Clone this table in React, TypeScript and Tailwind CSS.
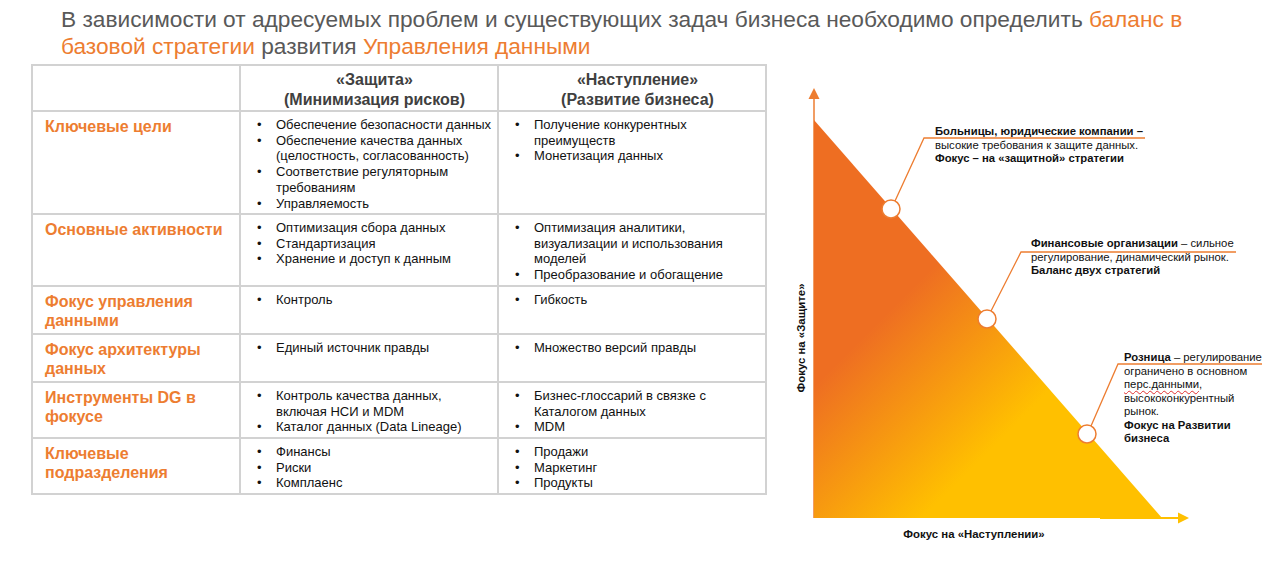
import React from 'react';

type Row = {
  label: string;
  defense: string[];
  offense: string[];
};

const rows: Row[] = [
  {
    label: 'Ключевые цели',
    defense: [
      'Обеспечение безопасности данных',
      'Обеспечение качества данных\n(целостность, согласованность)',
      'Соответствие регуляторным\nтребованиям',
      'Управляемость',
    ],
    offense: ['Получение конкурентных\nпреимуществ', 'Монетизация данных'],
  },
  {
    label: 'Основные активности',
    defense: ['Оптимизация сбора данных', 'Стандартизация', 'Хранение и доступ к данным'],
    offense: ['Оптимизация аналитики,\nвизуализации и использования\nмоделей', 'Преобразование и обогащение'],
  },
  { label: 'Фокус управления\nданными', defense: ['Контроль'], offense: ['Гибкость'] },
  { label: 'Фокус архитектуры\nданных', defense: ['Единый источник правды'], offense: ['Множество версий правды'] },
  {
    label: 'Инструменты DG в\nфокусе',
    defense: ['Контроль качества данных,\nвключая НСИ и MDM', 'Каталог данных (Data Lineage)'],
    offense: ['Бизнес-глоссарий в связке с\nКаталогом данных', 'MDM'],
  },
  {
    label: 'Ключевые\nподразделения',
    defense: ['Финансы', 'Риски', 'Комплаенс'],
    offense: ['Продажи', 'Маркетинг', 'Продукты'],
  },
];

const BulletList = ({ items }: { items: string[] }) => (
  <ul className="pl-[16px] pt-[5px] text-[13px] leading-[15.7px] text-[#111]">
    {items.map((item) => (
      <li key={item} className="flex">
        <span className="w-[19px] shrink-0">•</span>
        <span className="whitespace-pre-line">{item}</span>
      </li>
    ))}
  </ul>
);

const cell = 'border-r-2 border-b-2 border-[#d2d2d2]';
const headCell = `${cell} flex items-center justify-center text-center pt-[3px] pl-[11px] text-[16px] leading-[20px] font-bold text-[#404040]`;

const StrategyTable = () => (
  <div className="self-start ml-[31px] w-[736px] border-t-2 border-l-2 border-[#d2d2d2] grid grid-cols-[208px_258px_268px] grid-rows-[46px_103px_72px_48px_48px_56px_56px]">
    {/* Header */}
    <div className={cell} />
    <div className={headCell}>
      «Защита»
      <br />
      (Минимизация рисков)
    </div>
    <div className={headCell}>
      «Наступление»
      <br />
      (Развитие бизнеса)
    </div>

    {rows.map((row) => (
      <React.Fragment key={row.label}>
        <div className={`${cell} pl-[12px] pt-[5px] text-[16px] leading-[19px] font-bold text-[#ED7D31] whitespace-pre-line`}>
          {row.label}
        </div>
        <div className={cell}>
          <BulletList items={row.defense} />
        </div>
        <div className={cell}>
          <BulletList items={row.offense} />
        </div>
      </React.Fragment>
    ))}
  </div>
);

const StrategyChart = () => (
  <div className="relative w-[511px] h-[501px] text-[11.3px] leading-[13.5px] text-[#111]">
    <svg className="absolute inset-0" width={511} height={501} viewBox="767 64 511 501">
      <defs>
        <linearGradient id="tri" gradientUnits="userSpaceOnUse" x1="870" y1="330" x2="990" y2="450">
          <stop offset="0" stopColor="#EE6E22" />
          <stop offset="1" stopColor="#FFC000" />
        </linearGradient>
      </defs>

      {/* axes */}
      <line x1="1100" y1="518" x2="1179" y2="518" stroke="#FFC000" strokeWidth="2" />
      <polygon points="1189,518 1178,512.5 1178,523.5" fill="#FFC000" />
      <line x1="814" y1="97" x2="814" y2="518" stroke="#ED7D31" strokeWidth="1.5" />
      <polygon points="814,88 808.5,99 819.5,99" fill="#ED7D31" />

      <polygon points="814,120 814,518 1162,518" fill="url(#tri)" />

      {/* leaders */}
      <g stroke="#ED7D31" strokeWidth="1.3" fill="none">
        <polyline points="895,201 924,138 1145,138" />
        <polyline points="991,311 1021,252 1236,252" />
        <polyline points="1091,426 1118,364 1262,364" />
      </g>
      <g fill="#fff" stroke="#ED7D31" strokeWidth="1.5">
        <circle cx="891" cy="209" r="9" />
        <circle cx="987" cy="319" r="9" />
        <circle cx="1087" cy="434" r="9" />
      </g>

      <text x="974" y="538" textAnchor="middle" fontSize="11.4" fontWeight="bold" fill="#111" fontFamily="'Liberation Sans', Arial, sans-serif">
        Фокус на «Наступлении»
      </text>
      <text transform="translate(805,338) rotate(-90)" textAnchor="middle" fontSize="11.4" fontWeight="bold" fill="#111" fontFamily="'Liberation Sans', Arial, sans-serif">
        Фокус на «Защите»
      </text>
    </svg>

    <div className="absolute left-[168px] top-[61px] whitespace-nowrap">
      <b>Больницы, юридические компании –</b>
      <br />
      высокие требования к защите данных.
      <br />
      <b>Фокус – на «защитной» стратегии</b>
    </div>

    <div className="absolute left-[264px] top-[173px] whitespace-nowrap">
      <b>Финансовые организации</b> – сильное
      <br />
      регулирование, динамический рынок.
      <br />
      <b>Баланс двух стратегий</b>
    </div>

    <div className="absolute left-[357px] top-[287px] whitespace-nowrap">
      <b>Розница</b> – регулирование
      <br />
      ограничено в основном
      <br />
      <span className="underline decoration-wavy decoration-[#e03030] decoration-1 underline-offset-2">перс.данными</span>,
      <br />
      высококонкурентный
      <br />
      рынок.
      <br />
      <b>Фокус на Развитии</b>
      <br />
      <b>бизнеса</b>
    </div>
  </div>
);

export default function App() {
  return (
    <div className="w-[1278px] h-[565px] bg-white overflow-hidden font-['Liberation_Sans',Arial,sans-serif]">
      <h1 className="pl-[61px] pt-[6px] text-[22.7px] leading-[27px] text-[#595959] whitespace-nowrap">
        В зависимости от адресуемых проблем и существующих задач бизнеса необходимо определить{' '}
        <span className="text-[#ED7D31]">баланс в</span>
        <br />
        <span className="text-[#ED7D31]">базовой стратегии</span> развития{' '}
        <span className="text-[#ED7D31]">Управления данными</span>
      </h1>
      <div className="flex mt-[4px]">
        <StrategyTable />
        <StrategyChart />
      </div>
    </div>
  );
}
